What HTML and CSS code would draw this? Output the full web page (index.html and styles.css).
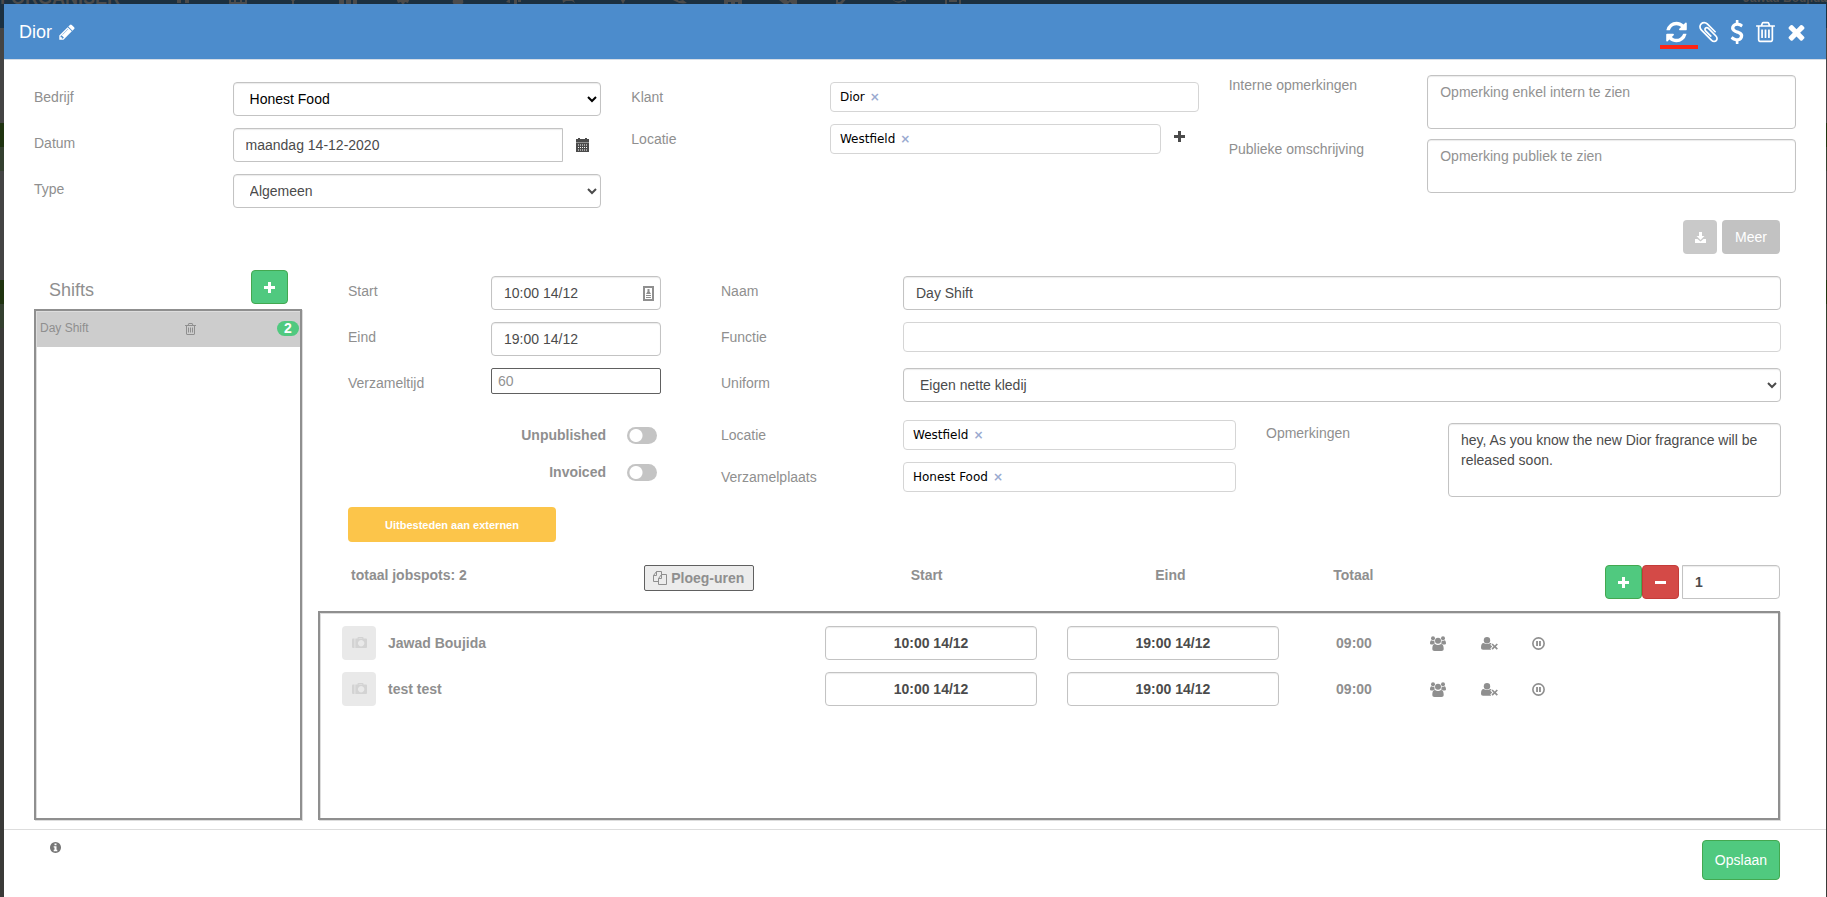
FILE: index.html
```html
<!DOCTYPE html>
<html lang="nl">

<head>
    <meta charset="UTF-8">
    <meta name="viewport" content="width=device-width, initial-scale=1.0">
    <title>Dior</title>
    <link rel="stylesheet" href="styles.css">
</head>

<body>
    <!-- iconen -->
    <svg class="sprite" width="0" height="0" aria-hidden="true">
        <symbol id="plus" viewBox="0 0 11 11"><path d="M4 0h3v4h4v3H7v4H4V7H0V4h4z" /></symbol>
        <symbol id="minus" viewBox="0 0 11 11"><path d="M0 4h11v3H0z" /></symbol>
        <symbol id="trash" viewBox="192 0 1408 1792"><path d="M704 736v576q0 14-9 23t-23 9h-64q-14 0-23-9t-9-23v-576q0-14 9-23t23-9h64q14 0 23 9t9 23zm256 0v576q0 14-9 23t-23 9h-64q-14 0-23-9t-9-23v-576q0-14 9-23t23-9h64q14 0 23 9t9 23zm256 0v576q0 14-9 23t-23 9h-64q-14 0-23-9t-9-23v-576q0-14 9-23t23-9h64q14 0 23 9t9 23zm128 724v-948h-896v948q0 22 7 40.5t14.5 27 10.5 8.5h832q3 0 10.5-8.5t14.5-27 7-40.5zm-672-1076h448l-48-117q-7-9-17-11h-317q-10 2-17 11zm928 32v64q0 14-9 23t-23 9h-96v948q0 83-47 143.5t-113 60.5h-832q-66 0-113-58.5t-47-141.5v-952h-96q-14 0-23-9t-9-23v-64q0-14 9-23t23-9h309l70-167q15-37 54-63t79-26h320q40 0 79 26t54 63l70 167h309q14 0 23 9t9 23z" /></symbol>
        <symbol id="users" viewBox="0 0 16 15">
            <circle cx="3" cy="2.2" r="2" /><circle cx="13" cy="2.2" r="2" /><circle cx="8" cy="4.8" r="3" />
            <path d="M0 7.6C0 5.6.6 4.3 1.500 4.300q1.500 1 3 .2c-.3 1.400 0 2.300.7 3.100-1 0-1.700.4-2.200 1H1.400Q0 8.600 0 7.600z" />
            <path d="M16 7.600c0-2-.6-3.300-1.500-3.300q-1.500 1-3 .2c.3 1.400 0 2.300-.7 3.100 1 0 1.700.4 2.200 1h1.600q1.400 0 1.400-1z" />
            <path d="M2.300 12.800c0-3 .9-4.800 2.700-4.800q3 2 6 0c1.800 0 2.700 1.800 2.700 4.800 0 1.400-.8 2.200-2.200 2.200h-7c-1.400 0-2.200-.8-2.200-2.200z" />
        </symbol>
        <symbol id="user-times" viewBox="0 0 17 13">
            <circle cx="6" cy="3.200" r="3.200" />
            <path d="M0 11c0-3 .8-4.900 2.600-4.900q3.400 2 6.800 0c.4 0 .8.1 1.100.4L9.300 7.700l1.900 1.900-1.900 1.900.9 1.100q-.4.200-1 .2H2Q0 12.800 0 11z" />
            <path d="M10.500 7.600l1.200-1.200 2 2 2-2 1.200 1.200-2 2 2 2-1.200 1.200-2-2-2 2-1.200-1.200 2-2z" />
        </symbol>
        <symbol id="pause" viewBox="0 0 12 12">
            <circle cx="6" cy="6" r="5.200" fill="none" stroke="currentColor" stroke-width="1.500" />
            <path d="M3.800 3.700h1.700v4.600H3.800zM6.500 3.700h1.700v4.600H6.500z" />
        </symbol>
        <symbol id="camera" viewBox="0 0 15 12">
            <path d="M0 2.500Q0 1.500 1 1.500h1.500V11H1q-1 0-1-1z" />
            <path fill-rule="evenodd" d="M3.300 1.500H5.500V1q0-1 1-1h4q1 0 1 1v.5H14q1 0 1 1V10q0 1-1 1H3.300zM6.700 1v.5h3.600V1zM9.100 3a3.200 3.200 0 1 0 .1 0z" />
        </symbol>
    </svg>

    <!-- achterliggende pagina -->
    <div class="backdrop" aria-hidden="true">
        <div class="navbar">
            <span class="brand">FORGANISER</span>
            <div class="nav-icons">
                <svg viewBox="0 0 18 15"><path d="M3 0h12v14h-4v-5H7v5H3z" /></svg>
                <svg viewBox="0 0 18 15"><path d="M0 0h18v15H0zM2 2v4h3V2zM7 2v4h4V2zM13 2v4h3V2zM2 8v5h3V8zM7 8v5h4V8zM13 8v5h3V8z" fill-rule="evenodd" /></svg>
                <svg viewBox="0 0 18 15"><path d="M7 0h4v6l3 3-4 3v3H8v-3l-4-3z" /></svg>
                <svg viewBox="0 0 18 15"><path d="M0 0h5v6H0zM7 0h5v6H7zM14 0h4v6h-4zM0 9h5v6H0zM7 9h5v6H7zM14 9h4v6h-4z" /></svg>
                <svg viewBox="0 0 18 15"><path d="M2 9h14l-2 5-3-1-1 2H8l-1-2-3 1z" /></svg>
                <svg viewBox="0 0 18 15"><path d="M0 8h18v3h-4q1 4-1 4H5q-2 0-1-4H0z" /></svg>
                <svg viewBox="0 0 18 15"><path d="M2 13l4-4v5zM10 9h3v6h-3zM14 9h3v4h-3z" /></svg>
                <svg viewBox="0 0 18 15"><path d="M3 8h2q4 6 8 0l3 6-3-2H7l-3 2z" /></svg>
                <svg viewBox="0 0 18 15"><path d="M5 0h8v8l-4 7-4-7z" /></svg>
                <svg viewBox="0 0 18 15"><path d="M0 8l6 1 4 3 4-1 4 3q-9 2-18-6z" /></svg>
                <svg viewBox="0 0 18 15"><path d="M0 11h18v4h-4v-2h-3v2H7v-2H4v2H0zM8 5h2v6H8z" /></svg>
                <svg viewBox="0 0 18 15"><path d="M0 11l5-2 4 3 4-3 5 2v4h-5l-2-2-2 2H5z" /></svg>
                <svg viewBox="0 0 18 15"><path d="M2 6h2v7h2l9-9v3l-7 8H2z" /></svg>
                <svg viewBox="0 0 18 15"><path d="M1 8q8 9 16 0v5l-3-1q-6 5-13-4z" /></svg>
                <svg viewBox="0 0 18 15"><path d="M1 0h2v15H1zM15 0h2v15h-2zM5 11h8v2H5z" /></svg>
            </div>
            <span class="user">Jawad Boujida</span>
        </div>
    </div>

    <div class="modal">
        <header class="modal-header">
            <h1>Dior</h1>
            <button type="button" class="icon-btn" aria-label="Bewerken">
                <svg width="18" height="18" viewBox="0 0 1792 1792"><path d="M491 1536l91-91-235-235-91 91v107h128v128h107zm523-928q0-22-22-22-10 0-17 7l-542 542q-7 7-7 17 0 22 22 22 10 0 17-7l542-542q7-7 7-17zm-54-192l416 416-832 832h-416v-416zm683 96q0 53-37 90l-166 166-416-416 166-165q36-38 90-38 53 0 91 38l235 234q37 39 37 91z" /></svg>
            </button>
            <div class="header-actions">
                <button type="button" class="icon-btn marked" aria-label="Vernieuwen">
                    <svg width="21" height="24" viewBox="128 0 1536 1792"><path d="M1639 1056q0 5-1 7-64 268-268 434.5t-478 166.5q-146 0-282.5-55t-243.5-157l-129 129q-19 19-45 19t-45-19-19-45v-448q0-26 19-45t45-19h448q26 0 45 19t19 45-19 45l-137 137q71 66 161 102t187 36q134 0 250-65t186-179q11-17 53-117 8-23 30-23h192q13 0 22.5 9.5t9.5 22.5zm25-800v448q0 26-19 45t-45 19h-448q-26 0-45-19t-19-45 19-45l138-138q-148-137-349-137-134 0-250 65t-186 179q-11 17-53 117-8 23-30 23h-199q-13 0-22.5-9.5t-9.5-22.5v-7q65-268 270-434.5t480-166.5q146 0 284 55.5t245 156.5l130-129q19-19 45-19t45 19 19 45z" /></svg>
                </button>
                <button type="button" class="icon-btn" aria-label="Bijlagen">
                    <svg width="19" height="24" viewBox="192 0 1408 1792"><path d="M1596 1385q0 117-79 196t-196 79q-135 0-235-100l-777-776q-113-115-113-271 0-159 110-270t269-111q158 0 273 113l605 606q10 10 10 22 0 16-30.5 46.5t-46.5 30.5q-13 0-23-10l-606-607q-79-77-181-77-106 0-179 75t-73 181q0 105 76 181l776 777q63 63 145 63 64 0 106-42t42-106q0-82-63-145l-581-581q-26-24-60-24-29 0-48 19t-19 48q0 32 25 59l410 410q10 10 10 22 0 16-31 47t-47 31q-12 0-22-10l-410-410q-63-61-63-149 0-82 57-139t139-57q88 0 149 63l581 581q100 98 100 235z" /></svg>
                </button>
                <button type="button" class="icon-btn" aria-label="Prijs">
                    <svg width="14" height="24" viewBox="384 0 1024 1792"><path d="M1362 1185q0 153-99.5 263.5t-258.5 136.5v175q0 14-9 23t-23 9h-135q-13 0-22.5-9.5t-9.5-22.5v-175q-66-9-127.5-31t-101.5-44.5-74-48-46.5-37.5-17.5-18q-17-21-2-41l103-135q7-10 23-12 15-2 24 9l2 2q113 99 243 125 37 8 74 8 81 0 142.5-43t61.500-122q0-28-15-53t-33.500-42-58.500-37.500-66-32-80-32.500q-39-16-61.500-25t-61.500-26.500-62.500-31-56.500-35.500-53.500-42.500-43.500-49-35.500-58-21-66.500-8.500-78q0-138 98-242t255-134v-180q0-13 9.500-22.500t22.500-9.500h135q14 0 23 9t9 23v176q57 6 110.500 23t87 33.500 63.500 37.500 39 29 15 14q17 18 5 38l-81 146q-8 15-23 16-14 3-27-7-3-3-14.500-12t-39-26.500-58.500-32-74.500-26-85.500-11.500q-95 0-155 43t-60 111q0 26 8.500 48t29.500 41.500 39.500 33 56 31 60.500 27 70 27.500q53 20 81 31.500t76 35 75.500 42.500 62 50 53 63.500 31.500 76.500 13 94z" /></svg>
                </button>
                <button type="button" class="icon-btn" aria-label="Verwijderen">
                    <svg width="19" height="24"><use href="#trash" /></svg>
                </button>
                <button type="button" class="icon-btn" aria-label="Sluiten">
                    <svg width="19" height="24" viewBox="192 0 1408 1792"><path d="M1490 1322q0 40-28 68l-136 136q-28 28-68 28t-68-28l-294-294-294 294q-28 28-68 28t-68-28l-136-136q-28-28-28-68t28-68l294-294-294-294q-28-28-28-68t28-68l136-136q28-28 68-28t68 28l294 294 294-294q28-28 68-28t68 28l136 136q28 28 28 68t-28 68l-294 294 294 294q28 28 28 68z" /></svg>
                </button>
            </div>
        </header>

        <form class="modal-body">
            <div class="top-fields">
                <div class="fields offset">
                    <div class="field">
                        <label for="bedrijf">Bedrijf</label>
                        <select id="bedrijf" class="control dark"><option>Honest Food</option></select>
                    </div>
                    <div class="field">
                        <label for="datum">Datum</label>
                        <div class="with-addon">
                            <input type="text" id="datum" class="control square-right" value="maandag 14-12-2020">
                            <button type="button" class="addon" aria-label="Kalender">
                                <svg width="13" height="14" viewBox="0 0 13 14"><path d="M0 1h2V0h2v1h5V0h2v1h2v3H0z" /><path opacity=".6" d="M0 4h13v1H0z" /><path fill-rule="evenodd" d="M0 5h13v9H0zM2 6.500v1h1v-1zM4 6.500v1h1v-1zM6 6.500v1h1v-1zM8 6.500v1h1v-1zM10 6.500v1h1v-1zM2 9v1h1V9zM4 9v1h1V9zM6 9v1h1V9zM8 9v1h1V9zM10 9v1h1V9zM2 11.500v1h1v-1zM4 11.500v1h1v-1zM6 11.500v1h1v-1zM8 11.500v1h1v-1zM10 11.500v1h1v-1z" /></svg>
                            </button>
                        </div>
                    </div>
                    <div class="field">
                        <label for="type">Type</label>
                        <select id="type" class="control"><option>Algemeen</option></select>
                    </div>
                </div>

                <div class="fields offset">
                    <div class="field">
                        <label for="klant">Klant</label>
                        <div class="tags">
                            <span>Dior</span><button type="button" aria-label="Dior verwijderen">×</button>
                            <input type="text" id="klant">
                        </div>
                    </div>
                    <div class="field">
                        <label for="locatie">Locatie</label>
                        <div class="with-addon">
                            <div class="tags">
                                <span>Westfield</span><button type="button" aria-label="Westfield verwijderen">×</button>
                                <input type="text" id="locatie">
                            </div>
                            <button type="button" class="addon high" aria-label="Locatie toevoegen">
                                <svg width="11" height="11"><use href="#plus" /></svg>
                            </button>
                        </div>
                    </div>
                </div>

                <div class="fields remarks">
                    <div class="field">
                        <label for="intern">Interne opmerkingen</label>
                        <textarea id="intern" class="control" placeholder="Opmerking enkel intern te zien"></textarea>
                    </div>
                    <div class="field">
                        <label for="publiek">Publieke omschrijving</label>
                        <textarea id="publiek" class="control" placeholder="Opmerking publiek te zien"></textarea>
                    </div>
                </div>
            </div>

            <div class="more-bar">
                <button type="button" class="btn grey light" aria-label="Downloaden">
                    <svg width="11" height="11" viewBox="0 0 11 11"><path d="M4 0h3v4h2.500l-4 4-4-4H4zM0 7h2.500l3 2.500 3-2.500H11v4H0z" /></svg>
                </button>
                <button type="button" class="btn grey">Meer</button>
            </div>

            <div class="planning">
                <aside class="shifts">
                    <div class="shifts-head">
                        <h2>Shifts</h2>
                        <button type="button" class="btn green square" aria-label="Shift toevoegen">
                            <svg width="11" height="11"><use href="#plus" /></svg>
                        </button>
                    </div>
                    <div class="panel">
                        <div class="shift">
                            <span>Day Shift</span>
                            <button type="button" aria-label="Shift verwijderen">
                                <svg width="11" height="14"><use href="#trash" /></svg>
                            </button>
                            <b class="badge">2</b>
                        </div>
                    </div>
                </aside>

                <section class="shift-detail">
                    <div class="shift-form">
                        <div class="fields times">
                            <div class="field">
                                <label for="start">Start</label>
                                <div class="time-box">
                                    <input type="text" id="start" class="control" value="10:00 14/12">
                                    <svg width="11" height="15" viewBox="0 0 11 15"><path d="M1 1h9v13H1z" fill="none" stroke="currentColor" stroke-width="2" /><path d="M4.500 3h2v2.500L8 8H3l1.500-2.500zM3 9h5v1H3zM3 11h5v1H3z" /></svg>
                                </div>
                            </div>
                            <div class="field">
                                <label for="eind">Eind</label>
                                <input type="text" id="eind" class="control" value="19:00 14/12">
                            </div>
                            <div class="field">
                                <label for="verzameltijd">Verzameltijd</label>
                                <input type="text" id="verzameltijd" class="plain-input" placeholder="60">
                            </div>
                            <div class="switches">
                                <label>Unpublished <input type="checkbox"></label>
                                <label>Invoiced <input type="checkbox"></label>
                            </div>
                            <button type="button" class="btn yellow">Uitbesteden aan externen</button>
                        </div>

                        <div class="fields info">
                            <div class="field">
                                <label for="naam">Naam</label>
                                <input type="text" id="naam" class="control" value="Day Shift">
                            </div>
                            <div class="field">
                                <label for="functie">Functie</label>
                                <div class="tags"><input type="text" id="functie"></div>
                            </div>
                            <div class="field">
                                <label for="uniform">Uniform</label>
                                <select id="uniform" class="control"><option>Eigen nette kledij</option></select>
                            </div>
                            <div class="places">
                                <label for="shift-locatie">Locatie</label>
                                <div class="tags">
                                    <span>Westfield</span><button type="button" aria-label="Westfield verwijderen">×</button>
                                    <input type="text" id="shift-locatie">
                                </div>
                                <label for="opmerkingen" class="note-label">Opmerkingen</label>
                                <textarea id="opmerkingen" class="control note">hey, As you know the new Dior fragrance will be released soon.</textarea>
                                <label for="verzamelplaats">Verzamelplaats</label>
                                <div class="tags">
                                    <span>Honest Food</span><button type="button" aria-label="Honest Food verwijderen">×</button>
                                    <input type="text" id="verzamelplaats">
                                </div>
                            </div>
                        </div>
                    </div>

                    <div class="jobs-head">
                        <span class="total">totaal jobspots: 2</span>
                        <button type="button" class="copy-btn">
                            <svg width="14" height="14" viewBox="0 0 14 14"><path d="M5.500 10.500h-5v-6l3-4h5v3M3.500.5v4h-3M8.500 3.500h5v10h-8v-6zM8.500 3.500v4h-3" fill="none" stroke="currentColor" /></svg>
                            Ploeg-uren
                        </button>
                        <span class="col-start">Start</span>
                        <span class="col-end">Eind</span>
                        <span class="col-total">Totaal</span>
                        <div class="spots">
                            <button type="button" class="btn green square" aria-label="Jobspot toevoegen"><svg width="11" height="11"><use href="#plus" /></svg></button>
                            <button type="button" class="btn red square" aria-label="Jobspot verwijderen"><svg width="11" height="11"><use href="#minus" /></svg></button>
                            <input type="text" class="control" value="1" aria-label="Aantal jobspots">
                        </div>
                    </div>

                    <div class="panel jobs">
                        <table>
                            <colgroup>
                                <col class="w-name"><col class="w-time"><col class="w-time"><col class="w-total">
                                <col class="w-icon"><col class="w-icon"><col class="w-icon"><col>
                            </colgroup>
                            <tr>
                                <td>
                                    <div class="person">
                                        <span class="photo"><svg width="15" height="12"><use href="#camera" /></svg></span>
                                        Jawad Boujida
                                    </div>
                                </td>
                                <td><input type="text" class="control time" value="10:00 14/12" aria-label="Start Jawad Boujida"></td>
                                <td><input type="text" class="control time" value="19:00 14/12" aria-label="Eind Jawad Boujida"></td>
                                <td class="hours">09:00</td>
                                <td class="action"><button type="button" aria-label="Ploeg"><svg width="16" height="15"><use href="#users" /></svg></button></td>
                                <td class="action"><button type="button" aria-label="Persoon verwijderen"><svg width="17" height="13"><use href="#user-times" /></svg></button></td>
                                <td class="action"><button type="button" aria-label="Pauze"><svg width="13" height="13"><use href="#pause" /></svg></button></td>
                                <td></td>
                            </tr>
                            <tr>
                                <td>
                                    <div class="person">
                                        <span class="photo"><svg width="15" height="12"><use href="#camera" /></svg></span>
                                        test test
                                    </div>
                                </td>
                                <td><input type="text" class="control time" value="10:00 14/12" aria-label="Start test test"></td>
                                <td><input type="text" class="control time" value="19:00 14/12" aria-label="Eind test test"></td>
                                <td class="hours">09:00</td>
                                <td class="action"><button type="button" aria-label="Ploeg"><svg width="16" height="15"><use href="#users" /></svg></button></td>
                                <td class="action"><button type="button" aria-label="Persoon verwijderen"><svg width="17" height="13"><use href="#user-times" /></svg></button></td>
                                <td class="action"><button type="button" aria-label="Pauze"><svg width="13" height="13"><use href="#pause" /></svg></button></td>
                                <td></td>
                            </tr>
                        </table>
                    </div>
                </section>
            </div>
        </form>

        <footer class="modal-footer">
            <svg width="11" height="11" viewBox="0 0 11 11"><path fill-rule="evenodd" d="M5.500 0a5.500 5.500 0 1 0 .01 0zM4.500 1.500h2v1.700h-2zM3.700 4.200h2.800v3.600h.8v1.400H3.700V7.800h.8V5.600h-.8z" /></svg>
            <button type="button" class="btn green save">Opslaan</button>
        </footer>
    </div>
</body>

</html>
```

FILE: styles.css
```css
* {
    box-sizing: border-box;
}

body {
    margin: 0;
    overflow: hidden;
    background-color: #3a3a38;
    color: #8f8f8f;
    font-family: "Liberation Sans", Arial, sans-serif;
    font-size: 14px;
    line-height: 20px;
}

h1,
h2 {
    margin: 0;
    font-size: 18px;
    font-weight: normal;
}

button,
input,
select,
textarea {
    margin: 0;
    font: inherit;
}

button {
    padding: 0;
    border: none;
    background: none;
    color: inherit;
    cursor: pointer;
}

svg {
    display: block;
    flex: none;
    fill: currentColor;
}

.sprite {
    position: absolute;
}

/* achtergrond achter de modal */
.backdrop {
    position: absolute;
    inset: 0;
    z-index: -1;
    overflow: hidden;
    background: linear-gradient(#444 123px, #1f3310 123px, #1f3310 147px, #34402f 147px, #34402f 171px,
        #444 171px, #444 280px, #1f3310 280px, #1f3310 304px, #34402f 304px, #34402f 328px, #3a3a38 328px);
}

.navbar {
    display: flex;
    align-items: flex-start;
    height: 28px;
    background-color: #1b3040;
    color: #4b4b4b;
}

.brand,
.user {
    margin-top: -12px;
    font-weight: bold;
}

.brand {
    width: 155px;
    font-size: 18px;
}

.nav-icons {
    display: grid;
    grid-template-columns: repeat(15, 55px);
    justify-items: center;
    margin-top: -11px;
}

.nav-icons svg {
    width: 18px;
    height: 15px;
}

.user {
    margin-left: auto;
    font-size: 12px;
}

.modal {
    display: flex;
    flex-direction: column;
    min-height: calc(100vh - 4px);
    margin: 4px 1px 0 4px;
    background-color: #fff;
}

.modal-header {
    display: flex;
    align-items: center;
    gap: 6px;
    height: 56px;
    padding: 0 20px 0 15px;
    border-bottom: 1px solid #d5dde6;
    background-color: #4c8ccc;
    color: #fff;
}

.header-actions {
    display: flex;
    gap: 12px;
    margin-left: auto;
}

.icon-btn {
    position: relative;
}

.marked::after {
    content: "";
    position: absolute;
    left: -6px;
    bottom: -5px;
    width: 38px;
    height: 4px;
    background-color: #fe2414;
}

.modal-body {
    display: flex;
    flex: 1;
    flex-direction: column;
    padding: 15px 30px 9px;
}

.top-fields {
    display: grid;
    grid-template-columns: 1fr 1fr 1fr;
    gap: 30px;
}

.fields {
    display: flex;
    flex-direction: column;
    gap: 12px;
}

.offset {
    padding-top: 7px;
}

.field {
    display: grid;
    grid-template-columns: 35% 1fr;
    align-items: start;
}

.field label,
.places label {
    padding-top: 5px;
}

.remarks {
    gap: 10px;
}

.remarks .field label {
    padding-top: 0;
}

.control {
    display: block;
    width: 100%;
    height: 34px;
    padding: 6px 12px;
    border: 1px solid #c3c3c3;
    border-radius: 4px;
    background-color: #fff;
    box-shadow: inset 0 1px 1px rgba(0, 0, 0, 0.08);
    color: #4b4b4b;
}

.control::placeholder {
    color: #929292;
}

textarea.control {
    height: 54px;
    resize: none;
}

.dark {
    color: #000;
}

.square-right {
    border-radius: 4px 0 0 4px;
}

.with-addon {
    display: flex;
}

.with-addon > :first-child {
    flex: 1;
}

.addon {
    display: flex;
    align-items: center;
    justify-content: center;
    width: 38px;
    color: #4b4b4b;
}

.high {
    padding-bottom: 6px;
}

.tags {
    display: flex;
    align-items: center;
    height: 30px;
    padding: 0 9px;
    border: 1px solid #d5d5d5;
    border-radius: 4px;
    color: #000;
    font-family: "DejaVu Sans", sans-serif;
    font-size: 12px;
}

.tags button {
    padding: 0 5px;
    color: #9aaad0;
    font-weight: bold;
}

.tags input {
    flex: 1;
    min-width: 0;
    padding: 0;
    border: none;
    outline: none;
    background: none;
}

.btn {
    display: flex;
    align-items: center;
    justify-content: center;
    height: 34px;
    padding: 0 12px;
    border: 1px solid transparent;
    border-radius: 4px;
    color: #fff;
}

.grey {
    background-color: #c2c2c2;
}

.light {
    background-color: #c9c9c9;
    width: 34px;
}

.green {
    border-color: #43a850;
    background-color: #50c97f;
}

.red {
    border-color: #c43c39;
    background-color: #d44a47;
}

.square {
    width: 37px;
}

.yellow {
    width: 208px;
    height: 35px;
    background-color: #fcc54a;
    font-size: 11px;
    font-weight: bold;
}

.more-bar {
    display: flex;
    justify-content: flex-end;
    gap: 5px;
    padding: 12px 16px 16px 0;
}

.planning {
    display: flex;
    flex: 1;
    gap: 16px;
    padding-right: 15px;
}

.shifts,
.shift-detail {
    display: flex;
    flex-direction: column;
}

.shifts {
    width: 268px;
}

.shift-detail {
    flex: 1;
    padding-top: 6px;
}

.shifts-head {
    display: flex;
    align-items: center;
    justify-content: space-between;
    height: 39px;
    padding: 0 14px 5px 15px;
}

.shifts-head h2 {
    padding-top: 6px;
}

.panel {
    flex: 1;
    border: 2px solid #8f8f8f;
    box-shadow: 1px 1px 0 #ddd, inset 1px 1px 0 #ddd;
}

.shift {
    display: grid;
    grid-template-columns: 1fr 1fr 1fr;
    align-items: center;
    height: 35px;
    margin: 1px 0 0 1px;
    padding: 0 1px 3px 3px;
    background-color: #cdcdcd;
    font-size: 12px;
}

.shift button {
    justify-self: end;
    padding: 2px 17px 0 0;
}

.badge {
    justify-self: end;
    width: 22px;
    border-radius: 8px;
    background-color: #50c97f;
    color: #fff;
    font-size: 14px;
    line-height: 15px;
    text-align: center;
}

.shift-form {
    display: grid;
    grid-template-columns: 313fr 1060fr;
    gap: 60px;
    padding-left: 30px;
}

.times .field {
    grid-template-columns: 143fr 170fr;
}

.time-box {
    position: relative;
}

.time-box svg {
    position: absolute;
    top: 10px;
    right: 7px;
}

.plain-input {
    width: 100%;
    height: 26px;
    padding: 0 6px;
    border: 1px solid #606060;
    border-radius: 2px;
}

.plain-input::placeholder {
    color: #929292;
}

.switches {
    display: flex;
    flex-direction: column;
    gap: 17px;
    padding: 19px 4px 13px 0;
}

.switches label {
    display: flex;
    align-items: center;
    justify-content: flex-end;
    gap: 21px;
    font-weight: bold;
}

.switches input {
    width: 30px;
    height: 17px;
    border-radius: 9px;
    appearance: none;
    background: radial-gradient(circle at 9px 50%, #fff 6px, #c4c4c4 7px);
}

.info .field {
    grid-template-columns: 182fr 878fr;
}

.info .field:nth-child(2) {
    height: 34px;
}

.places {
    display: grid;
    grid-template-columns: 182fr 333fr 212fr 333fr;
    row-gap: 12px;
    align-items: start;
    padding-top: 6px;
}

.places .note-label {
    padding: 3px 0 0 30px;
}

textarea.note {
    grid-column: 4;
    grid-row: 1 / 4;
    height: 74px;
    margin-top: 3px;
}

.jobs-head {
    display: grid;
    grid-template-columns: 326fr 175fr 216fr 28fr 216fr 30fr 90fr 382fr;
    align-items: start;
    margin-right: 1px;
    padding: 23px 0 12px;
    font-weight: bold;
    text-align: center;
}

.total {
    padding-left: 33px;
    text-align: left;
}

.col-end {
    grid-column: 5;
}

.col-total {
    grid-column: 7;
}

.copy-btn {
    display: flex;
    align-items: center;
    justify-content: center;
    gap: 4px;
    width: 110px;
    height: 26px;
    border: 1px solid #606060;
    border-radius: 2px;
    background-color: #ececec;
    font-weight: bold;
}

.spots {
    display: flex;
    justify-content: flex-end;
}

.spots .control {
    width: 98px;
    margin-left: 3px;
    border-radius: 0 4px 4px 0;
    font-weight: bold;
}

.jobs {
    margin-right: 1px;
    padding: 13px 0 0 1px;
}

.jobs table {
    width: 100%;
    border-collapse: collapse;
    table-layout: fixed;
    font-weight: bold;
}

.jobs td {
    padding: 0 0 12px;
}

.w-name {
    width: 34.6%;
}

.w-time {
    width: 16.6%;
}

.w-total {
    width: 6.2%;
}

.w-icon {
    width: 3.5%;
}

.person {
    display: flex;
    align-items: center;
    gap: 12px;
    padding-left: 21px;
}

.photo {
    display: flex;
    align-items: center;
    justify-content: center;
    width: 34px;
    height: 34px;
    border-radius: 4px;
    background-color: #e9e9e9;
    color: #d3d3d3;
}

.time {
    width: calc(100% - 30px);
    text-align: center;
}

.hours {
    text-align: center;
}

.jobs .action {
    padding-left: 31px;
}

.action button {
    display: block;
}

.modal-footer {
    display: flex;
    align-items: flex-start;
    justify-content: space-between;
    padding: 10px 46px 17px;
    border-top: 1px solid #ddd;
}

.modal-footer svg {
    margin-top: 2px;
    color: #777;
}

.save {
    height: 40px;
}
```
